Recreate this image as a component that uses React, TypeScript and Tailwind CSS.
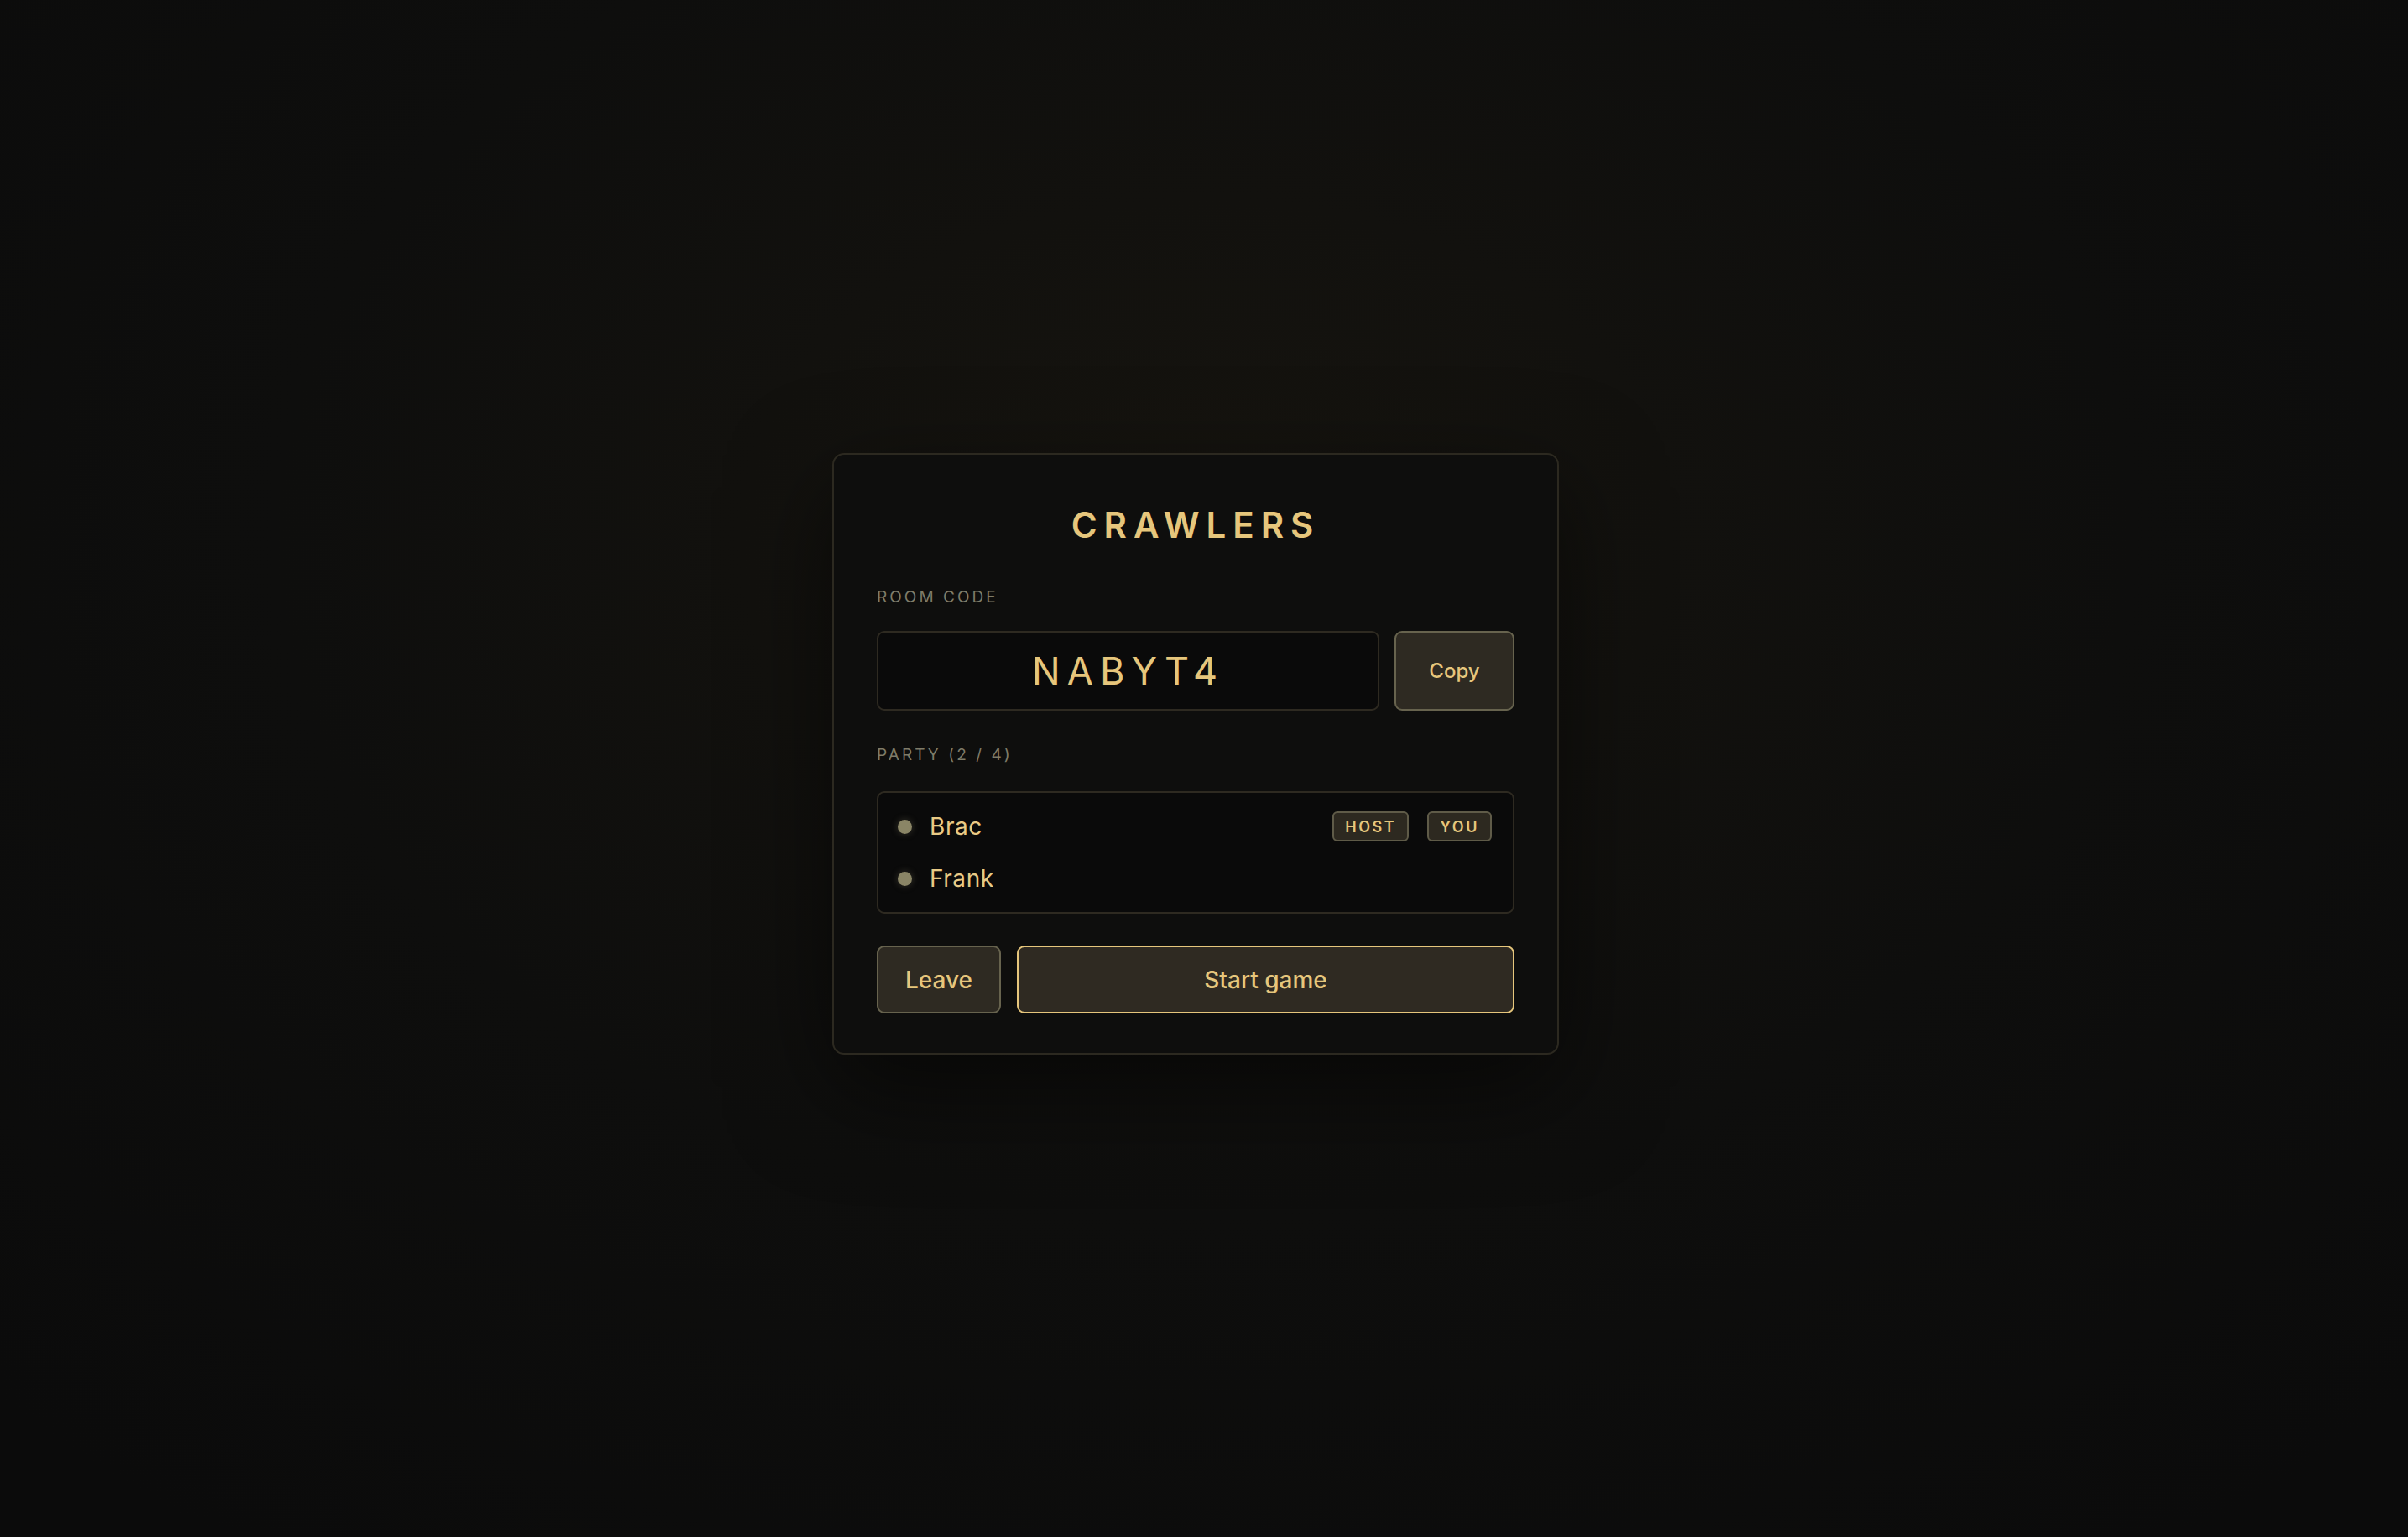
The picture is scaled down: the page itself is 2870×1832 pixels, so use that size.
const players = [
  { name: "Brac", host: true, you: true },
  { name: "Frank", host: false, you: false },
];

const Badge = ({ label }: { label: string }) => (
  <span className="h-[36px] px-[13px] flex items-center rounded-[6px] border-2 border-[#5f5b48] bg-[#2d2920] text-[18px] font-semibold tracking-[0.14em] text-[#e6c67c]">
    {label}
  </span>
);

const Lobby = () => {
  return (
    <div className="w-[866px] flex flex-col rounded-[14px] border-2 border-[#2c2920] bg-[#0e0e0d] px-[51px] pt-[59px] pb-[47px] shadow-[0_40px_120px_rgba(0,0,0,0.55)]">
      <h1 className="text-center text-[42px] leading-[50px] font-semibold tracking-[0.19em] text-[#e6c67c]">
        CRAWLERS
      </h1>

      <p className="mt-[49px] text-[19px] leading-[24px] tracking-[0.16em] text-[#7f7c69]">ROOM CODE</p>
      <div className="mt-[28px] flex gap-[18px]">
        <div className="flex-1 h-[95px] flex items-center justify-center rounded-[9px] border-2 border-[#2e2a21] bg-[#0a0a0a] text-[45px] tracking-[0.18em] text-[#e6c67c]">
          NABYT4
        </div>
        <button className="w-[143px] h-[95px] rounded-[9px] border-2 border-[#67634e] bg-[#2e2a22] text-[24px] font-medium text-[#e6c67c]">
          Copy
        </button>
      </div>

      <p className="mt-[41px] text-[19px] leading-[24px] tracking-[0.16em] text-[#7f7c69]">PARTY (2 / 4)</p>
      <ul className="mt-[31px] flex flex-col gap-[26px] rounded-[9px] border-2 border-[#2e2a21] bg-[#0a0a0a] pl-[23px] pr-[25px] py-[22px]">
        {players.map((p) => (
          <li key={p.name} className="h-[36px] flex items-center">
            <span className="w-[17px] h-[17px] rounded-full bg-[#8a8566] shadow-[0_0_8px_rgba(138,133,102,0.35)]" />
            <span className="ml-[21px] text-[28px] tracking-[0.02em] text-[#e9ca85]">{p.name}</span>
            <div className="ml-auto flex gap-[22px]">
              {p.host && <Badge label="HOST" />}
              {p.you && <Badge label="YOU" />}
            </div>
          </li>
        ))}
      </ul>

      <div className="mt-[38px] flex gap-[19px]">
        <button className="w-[148px] h-[81px] rounded-[9px] border-2 border-[#67634e] bg-[#2e2a22] text-[28px] font-medium text-[#e6c67c]">
          Leave
        </button>
        <button className="flex-1 h-[81px] rounded-[9px] border-2 border-[#e6c67c] bg-[#2f2a22] text-[28px] font-medium text-[#e6c67c]">
          Start game
        </button>
      </div>
    </div>
  );
};

export default function App() {
  return (
    <div className="w-full min-h-screen flex items-center justify-center pb-[35px] pr-[20px] font-['Inter','Liberation_Sans',sans-serif] bg-[radial-gradient(ellipse_70%_80%_at_50%_35%,#16140f_0%,#0e0e0d_55%,#0b0b0b_100%)]">
      <Lobby />
    </div>
  );
}
